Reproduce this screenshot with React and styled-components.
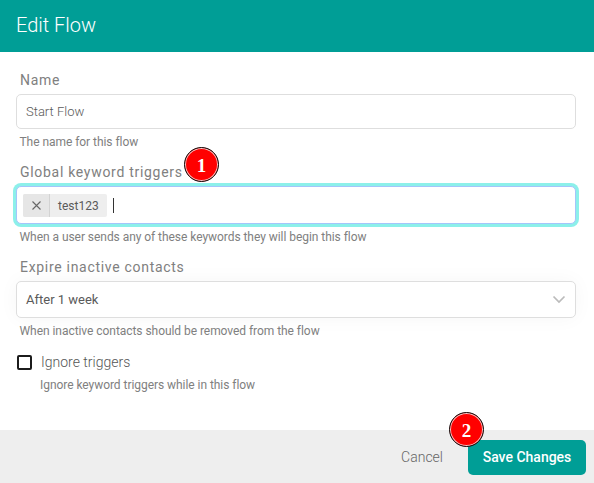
import React from 'react';
import styled, { createGlobalStyle } from 'styled-components';

const GlobalStyle = createGlobalStyle`
  * { box-sizing: border-box; }
  body { margin: 0; background: #fff; font-family: Roboto, "Open Sans", sans-serif; }
`;

const Dialog = styled.div`
  display: flex;
  flex-direction: column;
  width: 594px;
  height: 483px;
  overflow: hidden;
  background: #fff;
`;

const Header = styled.header`
  height: 52px;
  flex: none;
  padding-left: 16px;
  background: #009e96;
  color: #fff;
  font-size: 20px;
  font-weight: 300;
  line-height: 51px;
`;

const Body = styled.main`
  flex: 1;
  padding: 18px 18px 0 16px;
`;

const Field = styled.div`
  display: flex;
  flex-direction: column;
  margin-bottom: ${(p) => p.$gap}px;
`;

const LabelRow = styled.div`
  position: relative;
  align-self: flex-start;
  height: 24px;
  padding-left: 4px;
`;

const Label = styled.label`
  display: block;
  color: #808080;
  font-size: 14px;
  line-height: 20px;
  letter-spacing: 0.7px;
  white-space: nowrap;
`;

const Control = styled.div`
  display: flex;
  align-items: center;
  height: ${(p) => p.$height}px;
  padding: 0 9px;
  background: #fff;
  border: 1px solid #dedede;
  border-radius: 5px;
  color: #5a5a5a;
  font-size: 13px;
  font-weight: ${(p) => p.$weight || 400};
`;

const TagControl = styled(Control)`
  padding: 0 6px;
  border-color: #a4c5fb;
  box-shadow: 0 0 0 3px #8cf0ea;
`;

const SelectControl = styled(Control)`
  justify-content: space-between;
  box-shadow: 0 0 20px rgba(0, 0, 0, 0.04);
`;

const Tag = styled.span`
  display: flex;
  height: 23px;
  border-radius: 2px;
  overflow: hidden;
  background: #eee;
  line-height: 24px;
`;

const TagRemove = styled.span`
  display: flex;
  align-items: center;
  justify-content: center;
  width: 27px;
  background: #e6e6e6;
  border-right: 1px solid #d3d3d3;
`;

const TagText = styled.span`
  padding: 0 8px;
  font-size: 12px;
`;

const Caret = styled.span`
  width: 1px;
  height: 15px;
  margin-left: 6px;
  background: #333;
`;

const Help = styled.div`
  padding: 5px 0 0 3.500px;
  color: #808080;
  font-size: 12px;
  line-height: 16px;
  letter-spacing: -0.05px;
`;

const CheckRow = styled.div`
  display: flex;
  align-items: center;
  height: 20px;
  padding-left: 1px;
  gap: 9px;
  color: #555;
  font-size: 14px;
  font-weight: 300;
`;

const CheckBox = styled.span`
  width: 15px;
  height: 15px;
  border: 2px solid #1c1c1c;
  border-radius: 2px;
`;

const CheckHelp = styled(Help)`
  padding: 5px 0 0 24px;
`;

const Footer = styled.footer`
  display: flex;
  align-items: flex-start;
  justify-content: flex-end;
  height: 53px;
  flex: none;
  padding: 10px 8px 0 0;
  gap: 25px;
  background: #eee;
`;

const Cancel = styled.button`
  height: 35px;
  padding: 0 0 2px;
  border: 0;
  background: none;
  color: #666;
  font: 300 14px Roboto, sans-serif;
`;

const SaveWrap = styled.div`
  position: relative;
`;

const Save = styled.button`
  width: 118px;
  height: 35px;
  padding: 0 0 2px;
  border: 0;
  border-radius: 5px;
  background: #009e96;
  color: #fff;
  font: 500 14px Roboto, sans-serif;
`;

const Marker = styled.span`
  position: absolute;
  left: ${(p) => p.$left}px;
  top: ${(p) => p.$top}px;
  width: 35px;
  height: 35px;
  border: 1px solid #111;
  border-radius: 50%;
  background: #f00;
  box-shadow: inset 0 0 0 1px #f6c8c8;
  color: #fff;
  font: 700 19px/35px "Liberation Serif", serif;
  text-align: center;
`;

export default function App() {
  return (
    <Dialog>
      <GlobalStyle />
      <Header>Edit Flow</Header>
      <Body>
        <Field $gap={12}>
          <LabelRow><Label>Name</Label></LabelRow>
          <Control $height={35} $weight={300}>Start Flow</Control>
          <Help>The name for this flow</Help>
        </Field>
        <Field $gap={12}>
          <LabelRow>
            <Label>Global keyword triggers</Label>
            <Marker $left={168} $top={-15}>1</Marker>
          </LabelRow>
          <TagControl $height={38}>
            <Tag>
              <TagRemove>
                <svg width="9" height="9" viewBox="0 0 9 9" fill="none" stroke="#666" strokeWidth="1.1">
                  <path d="M.5.5l8 8M8.500.5l-8 8" />
                </svg>
              </TagRemove>
              <TagText>test123</TagText>
            </Tag>
            <Caret />
          </TagControl>
          <Help>When a user sends any of these keywords they will begin this flow</Help>
        </Field>
        <Field $gap={13}>
          <LabelRow><Label>Expire inactive contacts</Label></LabelRow>
          <SelectControl $height={37}>
            After 1 week
            <svg width="14" height="9" viewBox="0 0 14 9" fill="none" stroke="#bbb" strokeWidth="1.7">
              <path d="M1.500 1.500L7 7l5.500-5.500" />
            </svg>
          </SelectControl>
          <Help>When inactive contacts should be removed from the flow</Help>
        </Field>
        <CheckRow><CheckBox />Ignore triggers</CheckRow>
        <CheckHelp>Ignore keyword triggers while in this flow</CheckHelp>
      </Body>
      <Footer>
        <Cancel>Cancel</Cancel>
        <SaveWrap>
          <Save>Save Changes</Save>
          <Marker $left={-19} $top={-28}>2</Marker>
        </SaveWrap>
      </Footer>
    </Dialog>
  );
}
